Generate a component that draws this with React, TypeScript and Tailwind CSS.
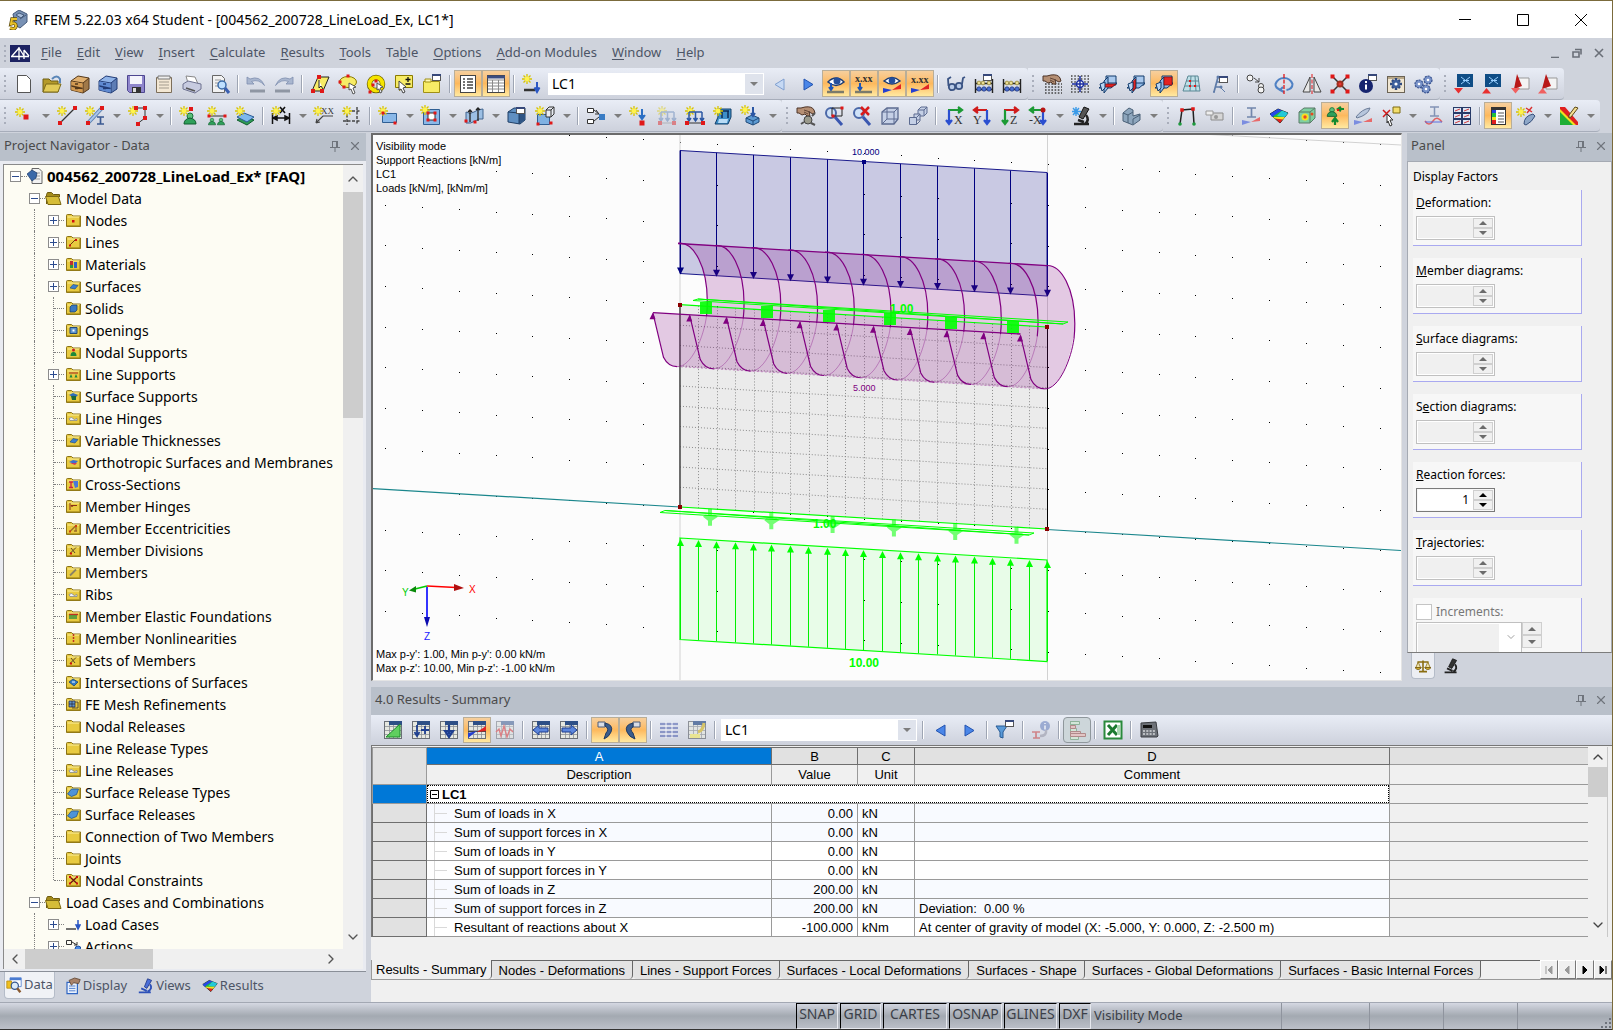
import React, { useState } from 'react';
import { ChevronDown, ChevronLeft, ChevronRight, ChevronUp, X } from 'lucide-react';
import clsx from 'clsx';

/* ---------- icon parts ---------- */

const Star = ({ x = 5, y = 5 }: { x?: number; y?: number }) => (
  <g stroke="#d8c400" strokeWidth="1.3">
    <path d={`M${x} ${y - 5}v10M${x - 5} ${y}h10M${x - 3.5} ${y - 3.5}l7 7M${x + 3.5} ${y - 3.5}l-7 7`} />
    <circle cx={x} cy={y} r="2.4" fill="#fff34d" stroke="none" />
  </g>
);

const Nd = ({ x, y, s = 4 }: { x: number; y: number; s?: number }) => (
  <rect x={x - s / 2} y={y - s / 2} width={s} height={s} fill="#e01818" />
);

const Sheet = ({ fill = '#fff' }: { fill?: string }) => (
  <path d="M3.5 1.5h9l4 4v13h-13z" fill={fill} stroke="#555" />
);

const Grid = () => (
  <>
    <rect x="1.5" y="1.5" width="17" height="17" fill="#e6e8e0" stroke="#6a6f76" />
    <path d="M2 6.500h16M2 10.500h16M2 14.500h16M6.500 2v16M10.500 2v16M14.500 2v16" stroke="#8b8f95" strokeWidth=".8" />
    <path d="M6 1h13v4H6z" fill="#2d4f86" />
  </>
);

const Abacus = () => (
  <>
    <path d="M1.500 5v14M18.500 5v14M1 9.500h18M1 15.500h18" stroke="#222" strokeWidth="1.400" />
    <g fill="#e9dc94" stroke="#8b7b28" strokeWidth=".7">
      <circle cx="5" cy="9" r="1.900" /><circle cx="9" cy="9" r="1.900" /><circle cx="15" cy="9" r="1.900" />
    </g>
    <g fill="#4a6fd0" stroke="#1b2f78" strokeWidth=".7">
      <circle cx="5" cy="15" r="2.200" /><circle cx="10" cy="15" r="2.200" /><circle cx="15" cy="15" r="2.200" />
    </g>
  </>
);

const Win = ({ x = 10, y = 1 }: { x?: number; y?: number }) => (
  <>
    <rect x={x + 0.5} y={y + 0.5} width="8" height="6" fill="#fff" stroke="#555" />
    <path d={`M${x} ${y + 1}h9`} stroke="#36487a" strokeWidth="2" />
  </>
);

const Planes = ({ hot }: { hot: string }) => (
  <>
    <path d="M8 2h10v9H8z" fill="#a9c9ee" stroke="#123a6b" />
    <path d="M1 14l6-5h12l-6 5z" fill="#8fb9e6" stroke="#123a6b" />
    <path d="M6 7l4-4v11l-4 5z" fill="#8fb9e6" stroke="#123a6b" />
    <path d={hot} fill="#e32222" stroke="#7a0d0d" strokeWidth=".7" />
    <path d="M2 10l5-2v6l-3 3z" fill="#b9d6f4" stroke="#123a6b" />
  </>
);

const Cabinet = ({ a, b, c }: { a: string; b: string; c: string }) => (
  <>
    <path d="M1 7l7-5 11 2v11l-6 4-12-3z" fill={a} stroke={c} />
    <path d="M13 9l6-5v11l-6 4z" fill={c} fillOpacity=".45" />
    <path d="M1 7l12 2 6-5M13 9v10M1 11.500l12 3" stroke={c} fill="none" />
    <path d="M1.500 7.500l11 2v9l-11-2.500z" fill={b} />
    <path d="M1.500 12l11 2.500M5 10h3M5 14.500h3" stroke={c} strokeWidth="1.300" />
  </>
);

const Cube = ({ fill = '#5f93c9', stroke = '#27496d' }: { fill?: string; stroke?: string }) => (
  <>
    <path d="M2 6l5-4h11v10l-5 5H2z" fill={fill} stroke={stroke} />
    <path d="M2 6h11v11M13 6l5-4" fill="none" stroke={stroke} />
  </>
);

const Support = ({ x, y, k = 1 }: { x: number; y: number; k?: number }) => (
  <g transform={`translate(${x} ${y}) scale(${k})`}>
    <circle r="3" fill="#5cc07a" stroke="#16713a" />
    <path d="M-6 8q0-5 6-6q6 1 6 6z" fill="#2fa05a" stroke="#0f5c2c" />
  </g>
);

const LoadArrows = ({ c }: { c: string }) => (
  <path d="M4 6h13M4 6v8M10.500 6v8M17 6v8M2 12l2 3 2-3M8.500 12l2 3 2-3M15 12l2 3 2-3" stroke={c} strokeWidth="1.500" fill="none" />
);

const Hand = () => (
  <>
    <path d="M1 2h4l4-1q7-1 9 3l1 3-2 1-4-2 1 4-3 0-2-2-3 1-3-2H1z" fill="#b58f74" stroke="#4d3428" />
    <path d="M8 4l6 2M8 6l4 2" stroke="#4d3428" strokeWidth=".8" />
  </>
);

const Axes = ({ h, v, flip, label }: { h: string; v: string; flip?: boolean; label: string }) => (
  <>
    <path d={flip ? 'M15 4H3M6 1L2 4l4 3' : 'M4 4h12M14 1l4 3-4 3'} stroke={h} strokeWidth="2.200" fill={h} />
    <path d={flip ? 'M15 4v12M12 14l3 4 3-4' : 'M5 4v12M2 14l3 4 3-4'} stroke={v} strokeWidth="2.200" fill={v} />
    <text x={flip ? 1 : 10} y="18" fontSize="12" fill="#333" fontFamily="Liberation Serif">{label}</text>
  </>
);

const gearPath = 'M10 4v12M4 10h12M6 6l8 8M14 6l-8 8';

const ICONS: Record<string, React.ReactNode> = {
  doc: <Sheet />,
  open: <><path d="M1 5h6l2 2h7v11H1z" fill="#b49a2a" stroke="#6f5e14" /><path d="M4 10h15l-3 8H1z" fill="#e2cb57" stroke="#7d6a18" /><path d="M10 5q5-5 8 0v4" stroke="#5a86b8" strokeWidth="2" fill="none" /></>,
  cabTan: <Cabinet a="#e0b070" b="#d39a52" c="#54381a" />,
  cabBlue: <Cabinet a="#8fb3e8" b="#5f8ad2" c="#223c77" />,
  save: <><path d="M1.500 1.500h17v17h-15l-2-2z" fill="#8f86cc" stroke="#4d4690" /><path d="M4 2h12v8H4z" fill="#f4f4fb" /><path d="M6 13h9v6H6z" fill="#333" /><path d="M7 14h3v4H7z" fill="#ddd" /></>,
  clip: <><path d="M2.500 3.500h15v15h-15z" fill="#f3e7d3" stroke="#7c6e5a" /><path d="M4 2h12v3H4z" fill="#efefef" stroke="#777" /><path d="M5 8h10M5 11h10M5 14h10" stroke="#a39b8d" /></>,
  print: <><path d="M4 2l9 1 3 7-10-1z" fill="#fff" stroke="#888" /><path d="M1 10l5-3 13 3v5l-6 4-12-4z" fill="#c7cbe0" stroke="#6e7290" /><path d="M4 14l9 3" stroke="#555" strokeWidth="1.500" /></>,
  preview: <><path d="M2.500 1.500h9l3 3v14h-12z" fill="#f2f2f2" stroke="#666" /><path d="M5 6h6M5 9h5M5 12h4" stroke="#999" /><circle cx="12" cy="11" r="4" fill="#bfe0ff" stroke="#3c6ca8" strokeWidth="1.500" /><path d="M15 14l4 5" stroke="#3a5fb0" strokeWidth="3" /></>,
  undo: <><path d="M1 3v7h7L5.500 7.500q7-3 13 4Q14 1 4 5z" fill="#a9b6cf" stroke="#7e8eae" strokeWidth=".8" /><path d="M4 17h15" stroke="#8f96a3" strokeWidth="3" /></>,
  redo: <><path d="M19 3v7h-7l2.500-2.500q-7-3-13 4Q6 1 16 5z" fill="#a9b6cf" stroke="#7e8eae" strokeWidth=".8" /><path d="M1 17h15" stroke="#8f96a3" strokeWidth="3" /></>,
  selPlane: <><path d="M8 3h11l-6 14H2z" fill="#f7ec66" stroke="#222" /><Nd x={9} y={3} /><Nd x={3} y={17} /><Nd x={12} y={17} /><path d="M9 6v8l2-2 2 3" fill="#fff" stroke="#222" /></>,
  selLasso: <><ellipse cx="10" cy="8" rx="8.500" ry="5.500" fill="#f7ec66" stroke="#8a7a00" /><Nd x={10} y={2} s={3} /><Nd x={2} y={8} s={3} /><Nd x={6} y={13} s={3} /><path d="M11 9l7 4-3 1 2 5-2 1-2-5-2 1z" fill="#fff" stroke="#555" /></>,
  selRing: <><circle cx="10" cy="10" r="6.500" fill="none" stroke="#6e6200" strokeWidth="5.500" /><circle cx="10" cy="10" r="6.500" fill="none" stroke="#f5e400" strokeWidth="4" /><Nd x={10} y={7} s={3} /><Nd x={7} y={11} s={3} /><Nd x={4} y={18} s={3} /><path d="M11 9l6 4-3 1 2 4-2 1-1-4-2 1z" fill="#fff" stroke="#555" /></>,
  selNote: <><path d="M1.500 1.500h17v12h-9l-4 3v-3h-4z" fill="#f7ec66" stroke="#8a7a00" /><path d="M14 3v5M11.500 5.500h5M11.500 10h5" stroke="#111" strokeWidth="1.300" /><path d="M5 7l7 6-3 1 2 4-2 1-2-4-2 1z" fill="#fff" stroke="#444" /></>,
  selWin: <><path d="M1.500 7.500h16v11h-16z" fill="#f7ec66" stroke="#a09016" /><path d="M3 5h6v3H3z" fill="#fff8b0" stroke="#a09016" /><Win x={10} y={0} /></>,
  list: <><rect x="2.500" y="1.500" width="15" height="17" fill="#fff" stroke="#444" /><path d="M5 5h2M5 8h2M5 11h2M5 14h2M9 5h6M9 8h6M9 11h6M9 14h6" stroke="#444" strokeWidth="1.300" /></>,
  tableI: <><rect x="1.500" y="1.500" width="17" height="17" fill="#fff" stroke="#444" /><path d="M1 3h18" stroke="#3b4d80" strokeWidth="3" /><path d="M2 6h16M2 9h16M2 12h16M2 15h16M6.500 6v12M12.500 6v12" stroke="#8a8a8a" /></>,
  loadStar: <><Star /><path d="M2 16h11" stroke="#333" strokeWidth="2.500" /><path d="M15 8v8M12.500 13.500L15 18l2.500-4.500" stroke="#2b57c4" strokeWidth="2" fill="#2b57c4" /></>,
  prev: <path d="M14 5v11l-9-5.500z" fill="#c6d9f4" stroke="#7f9fd0" />,
  prev2: <path d="M14 5v11l-9-5.500z" fill="#4a86e8" stroke="#2253b0" />,
  next: <path d="M6 5v11l9-5.500z" fill="#4a86e8" stroke="#2253b0" />,
  eyeLoad: <><path d="M2 8q8-8 16 0-8 7-16 0z" fill="#fff" stroke="#1d3c72" strokeWidth="1.500" /><circle cx="11" cy="7" r="3.500" fill="#244f9c" /><path d="M5 9v6M3 13l2 3 2-3" stroke="#1c56b8" strokeWidth="2" fill="#1c56b8" /><path d="M1 18h17" stroke="#7b7b6b" strokeWidth="2.500" /></>,
  xxLoad: <><text x="1" y="8" fontSize="10" fontWeight="bold" fill="#333" fontFamily="Liberation Serif">x.xx</text><path d="M6 9v6M4 13l2 3 2-3" stroke="#1c56b8" strokeWidth="2" fill="#1c56b8" /><path d="M1 18h17" stroke="#7b7b6b" strokeWidth="2.500" /></>,
  eyeRes: <><path d="M2 7q8-7 16 0-8 6-16 0z" fill="#fff" stroke="#1d3c72" strokeWidth="1.500" /><circle cx="10" cy="6.500" r="3.300" fill="#244f9c" /><path d="M1 14v5l9-3z" fill="#2440d0" /><path d="M19 10v5l-9 1z" fill="#e02525" /></>,
  xxRes: <><text x="1" y="9" fontSize="10" fontWeight="bold" fill="#333" fontFamily="Liberation Serif">x.xx</text><path d="M1 14v5l9-3z" fill="#2440d0" /><path d="M19 10v5l-9 1z" fill="#e02525" /></>,
  glasses: <g fill="#b7c9e6" stroke="#3b5484" strokeWidth="1.800"><circle cx="6" cy="13" r="3.200" /><circle cx="13" cy="12" r="3.200" /><path d="M2.500 12L2 5l3-2M16 10l1-6 2-1" fill="none" /></g>,
  abacusWin: <><Abacus /><Win x={9} y={0} /></>,
  abacus: <Abacus />,
  hand: <><path d="M3 10h17M3 13h17M3 16h17M3 19h17" stroke="#444" strokeWidth="1.600" strokeDasharray="1.600 1.600" /><Hand /></>,
  snapGrid: <><path d="M1 2h18M1 5h18M1 8h18M1 12h18M1 15h18M1 18h18" stroke="#444" strokeWidth="1.500" strokeDasharray="1.500 1.800" /><circle cx="10" cy="10" r="3.500" fill="#fff" stroke="#1c2fa0" strokeWidth="1.500" /><path d="M10 2v16M2 10h16" stroke="#1c2fa0" strokeWidth="1.500" /></>,
  plane1: <Planes hot="M3 13l4-3h11l-4 3z" />,
  plane2: <Planes hot="M7 7.500l2.500-2.500v9l-2.500 3z" />,
  plane3: <Planes hot="M10 3h8v8h-8z" />,
  mesh: <><path d="M6 2h10l2 15H1z" fill="#bfe0e8" stroke="#5b8794" /><path d="M4 7h13M3 12h15M9 2l-1 15M13 2l1 15" stroke="#5b8794" /><Nd x={8} y={7} s={2} /><Nd x={13} y={12} s={2} /><Nd x={8} y={12} s={2} /></>,
  tree: <><path d="M4 18L8 3M5 13h5M7 8h8M3 18h2" stroke="#5e7ba8" strokeWidth="1.700" fill="none" /><circle cx="8" cy="3" r="1.500" fill="#5e7ba8" /><circle cx="11" cy="13" r="1.500" fill="#5e7ba8" /><path d="M10 13l5 5" stroke="#5e7ba8" /><Win x={9} y={2} /></>,
  copyO: <g fill="#f4f4f4" stroke="#444"><circle cx="4" cy="4" r="3" /><circle cx="15" cy="12" r="2.500" /><circle cx="15" cy="16" r="3" /><path d="M8 4l5 4M13 4v4H9" fill="none" /></g>,
  rotate: <><path d="M7 16Q1 14 1.500 10 4 4 10 4t8.500 6q0 5-6 6M9 13l-3 3 4 2" fill="none" stroke="#4f81c4" strokeWidth="2" /><path d="M10 0v20" stroke="#e01818" strokeWidth="1.300" strokeDasharray="4 1.500" /></>,
  mirror: <><path d="M8 3v15H1zM12 3v15h7z" fill="#e8e8e8" stroke="#444" /><path d="M10 0v20" stroke="#e01818" strokeDasharray="4 1.500" /></>,
  explode: <><path d="M2 2l16 16M18 2L2 18" stroke="#333" strokeWidth="1.500" /><Nd x={2.500} y={2.500} /><Nd x={17.500} y={2.500} /><Nd x={2.500} y={17.500} /><Nd x={17.500} y={17.500} /><circle cx="10" cy="10" r="3.500" fill="#a03020" /><circle cx="10" cy="10" r="1.500" fill="#e33" /></>,
  info: <><Win x={10} y={0} /><circle cx="8" cy="12" r="7" fill="#16246e" /><path d="M8 7v2M8 10.500v5" stroke="#fff" strokeWidth="2" /></>,
  gearWin: <><rect x="1.500" y="2.500" width="17" height="16" fill="#f0e6d2" stroke="#6b6355" /><path d="M2 4h16" stroke="#b9a98a" strokeWidth="2" /><path d={gearPath} stroke="#2f4a80" strokeWidth="2.500" /><circle cx="10" cy="10" r="4" fill="#3e5f9c" /><circle cx="10" cy="10" r="1.600" fill="#fff" /></>,
  gears: <g fill="#7892c8" stroke="#354f8c" strokeWidth="1.200"><circle cx="5" cy="10" r="4" strokeDasharray="2 1" /><circle cx="14" cy="6" r="4" strokeDasharray="2 1" /><circle cx="12" cy="15" r="4" strokeDasharray="2 1" /><g fill="#fff" stroke="none"><circle cx="5" cy="10" r="1.300" /><circle cx="14" cy="6" r="1.300" /><circle cx="12" cy="15" r="1.300" /></g></g>,
  dxf1: <><path d="M3 0h16v13H3z" fill="#0f4d85" /><path d="M7 3l9 7M16 3L7 10M9 6.500h6" stroke="#9ad0ff" /><path d="M0 14h9l-4.500 5.500z" fill="#e83030" /></>,
  dxf2: <><path d="M3 0h16v13H3z" fill="#0f4d85" /><path d="M7 3l9 7M16 3L7 10M9 6.500h6" stroke="#9ad0ff" /><path d="M0 19.500h9L4.500 14z" fill="#e83030" /></>,
  pdf1: <><path d="M8 4h11v11H8z" fill="#f4f4f4" stroke="#999" /><path d="M7 0l5 12-8 3z" fill="#b81818" /><path d="M1 14h9l-4.500 5.500z" fill="#f06060" /></>,
  pdf2: <><path d="M8 4h11v11H8z" fill="#f4f4f4" stroke="#999" /><path d="M8 0l5 12-9 3z" fill="#b81818" /><path d="M0 19.500h9L4.500 14z" fill="#f06060" /></>,

  node: <><Star x={6} y={6} /><Nd x={12} y={11} s={5} /></>,
  line: <><path d="M3 17L18 2" stroke="#333" strokeWidth="1.300" /><Star /><Nd x={3} y={17} /><Nd x={18} y={2} /></>,
  member: <><path d="M3 17L17 2" stroke="#5b7fae" strokeWidth="4" /><path d="M3 17L17 2" stroke="#a9c5ea" strokeWidth="2" /><Star /><Nd x={17} y={2} /><Nd x={3} y={17} /><path d="M12 11h7M12 18h7M15.500 11v7" stroke="#3b5a92" strokeWidth="1.700" /></>,
  poly: <><path d="M8 2h9v10l-8 6" stroke="#333" fill="none" /><Star /><Nd x={8} y={2} /><Nd x={17} y={2} /><Nd x={17} y={12} /><Nd x={10} y={18} /></>,
  nsup: <><Support x={11} y={10} /><Star /><Nd x={12} y={3} /></>,
  lsup: <><path d="M2 10h16" stroke="#333" /><Support x={5} y={14} k={0.6} /><Support x={14} y={14} k={0.6} /><Star /><Nd x={2} y={10} s={3} /><Nd x={18} y={10} s={3} /></>,
  ssup: <><path d="M2 14l7-4 10 4-7 5z" fill="#2f9a55" stroke="#0f5c2c" /><path d="M2 11l7-4 10 4-7 5z" fill="#7db8ec" stroke="#2a5a96" /><Star /></>,
  dim: <><path d="M1.500 7v11M18.500 7v11M2 12h16M6 10l-4 2 4 2zM14 10l4 2-4 2z" stroke="#111" strokeWidth="1.500" fill="#111" /><path d="M9 1l5 6M14 1L9 7" stroke="#111" strokeWidth="1.600" /><Star /></>,
  xx: <><path d="M2 17l7-7h10M2 17l1-4M2 17l4-1" stroke="#444" strokeWidth="1.200" fill="none" /><text x="7" y="8" fontSize="9" fill="#333" fontFamily="Liberation Serif">XX</text><Star x={4} /></>,
  gridI: <><path d="M5 4v15M15 1v18M1 5h18M1 15h18" stroke="#444" strokeWidth="1.400" strokeDasharray="3 1.500" /><Star x={5} y={5} /></>,
  surf: <><path d="M4.500 7.500h14v9h-14z" fill="#8ab8e8" stroke="#2f5e93" /><Star /><Nd x={17} y={17} s={3} /><Nd x={5} y={7} s={3} /></>,
  opening: <><path d="M2.500 3.500h16v15h-16z" fill="#8ab8e8" stroke="#2f5e93" /><path d="M7 7h7v7H7z" fill="#fff" stroke="#333" /><Star x={4} y={4} /><Nd x={7} y={7} s={3} /><Nd x={14} y={7} s={3} /><Nd x={7} y={14} s={3} /><Nd x={14} y={14} s={3} /></>,
  warp: <><path d="M2 6q4 3 8 0t9-3v10q-4-1-8 2t-9 2z" fill="#9cbfe4" stroke="#41648f" /><path d="M6 4v12M14 2v13M4 6l2-2 2 2M12 4l2-2 2 2" stroke="#222" strokeWidth="1.300" /><Nd x={2} y={15} s={3} /><Nd x={11} y={16} s={3} /></>,
  solid: <><path d="M1 6l6-4h11v12l-5 4-12-2z" fill="#5f8fc2" stroke="#1f3f66" /><path d="M12 7l6-5v12l-6 4z" fill="#2f5585" /><path d="M1 6l11 1v11" fill="none" stroke="#1f3f66" /><Win x={9} y={1} /></>,
  solid2: <><path d="M2.500 8.500h12v10h-12z" fill="#7fb1e2" stroke="#2f5e93" /><path d="M11 4l3-3h5v7l-3 3h-5z" fill="#e8ecf2" stroke="#333" /><path d="M11 4h5v7M16 4l3-3" stroke="#333" /><Star /><Nd x={3} y={18} s={3} /><Nd x={16} y={17} s={3} /></>,
  sets: <><path d="M1.500 2.500h6v4h-6zM1.500 13.500h6v4h-6z" fill="#fff" stroke="#333" /><path d="M8 4l5 4M8 15l5-4M10 4l3 4-4 0" stroke="#333" fill="none" /><path d="M13 8h6v6h-6z" fill="#3a7cc4" /></>,
  nload: <><Star /><path d="M13 3v8M10 9l3 4 3-4" stroke="#2b6fc4" strokeWidth="2" fill="#2b6fc4" /><Nd x={13} y={17} s={5} /></>,
  llDim: <g opacity=".45"><Star /><LoadArrows c="#5a7fb5" /><path d="M3 17h15" stroke="#888" /><Nd x={3} y={17} /><Nd x={17} y={17} /></g>,
  lload: <><Star /><LoadArrows c="#2b57a4" /><path d="M3 17h15" stroke="#333" /><Nd x={2} y={17} /><Nd x={18} y={17} /></>,
  sload: <><path d="M4 3h14v8l-3 7H2l3-7z" fill="#3d8fc8" stroke="#14406b" /><path d="M9 5v7M15 5v7M7 5h9" stroke="#0c2c55" strokeWidth="1.500" /><path d="M6 13h9l-1 4H5z" fill="#b9dcf6" /><Star /></>,
  soload: <><path d="M5 12l6-3 7 3v4l-6 3-7-3z" fill="#5c9ad2" stroke="#1f4a7a" /><path d="M5 12l7 3 6-3M12 15v4" stroke="#1f4a7a" fill="none" /><path d="M12 1v8M10 7l2 3 2-3" stroke="#2b57a4" strokeWidth="2" fill="none" /><Star x={4} y={4} /></>,
  pan: <><Hand /><circle cx="12" cy="14" r="4" fill="#9a9a8c" stroke="#444" /><path d="M5 18l3-2M16 10l3-3M15 17l4 2" stroke="#555" strokeWidth="2" /></>,
  zoomRect: <><circle cx="7" cy="7" r="5" fill="#cfe2f8" stroke="#4b68a8" strokeWidth="2" /><path d="M11 11l7 8" stroke="#3a57b0" strokeWidth="3" /><path d="M8 2h10v8H8z" fill="none" stroke="#222" /><Nd x={9} y={10} s={3} /><Nd x={18} y={2} s={3} /></>,
  zoomX: <><circle cx="7" cy="7" r="5" fill="#cfe2f8" stroke="#4b68a8" strokeWidth="2" /><path d="M11 11l7 8" stroke="#3a57b0" strokeWidth="3" /><path d="M9 1l8 8M17 1L9 9" stroke="#d81b1b" strokeWidth="2.500" /></>,
  cubeW: <><path d="M2 6l5-4h11v11l-4 5H2z" fill="#c5d0e6" stroke="#5c6b90" strokeWidth="1.300" /><path d="M2 6h12v12M14 6l4-4M7 2v11h11M7 13l-5 5" fill="none" stroke="#5c6b90" /></>,
  cubesW: <g fill="#c5d0e6" stroke="#5c6b90"><path d="M10 4l3-3h6v6l-3 3h-6z" /><path d="M10 4h6v6M16 4l3-3" /><path d="M6 8h6v6H6z" /><path d="M1.500 11.500h7v7h-7z" /><path d="M8.500 18.500l4-4M8.500 11.500L12 8" /></g>,
  axX: <Axes h="#1c9a35" v="#2b4fd0" label="X" />,
  axY: <Axes h="#d01c1c" v="#2b4fd0" flip label="Y" />,
  axZ: <Axes h="#d01c1c" v="#1c9a35" label="Z" />,
  axMX: <><Axes h="#1c9a35" v="#2b4fd0" flip label="-X" /><circle cx="15" cy="4" r="2.500" fill="#b81414" /></>,
  scope: <><path d="M13 1l5 2-6 10-4-2z" fill="#555" stroke="#111" /><path d="M3 18h15M15 9q4 5-1 9M7 14l6 2" stroke="#222" strokeWidth="2.500" fill="none" /><path d="M5 1v9M1 5.500h9M2 2l6 7M8 2L2 9" stroke="#3a9ae8" strokeWidth="1.400" /></>,
  iso: <><path d="M1 7l6-5 4 2v6l7-2v6l-7 5-10-4z" fill="#8ea6bd" stroke="#4a6077" /><path d="M1 7l5 2v8M6 9l5-3M11 13l7-4M11 13v5" fill="none" stroke="#4a6077" /></>,
  frame: <><path d="M3 18L5 4l11-1 1 15" fill="none" stroke="#222" strokeWidth="1.500" /><Nd x={5} y={4} s={3.500} /><Nd x={16} y={3} s={3.500} /><circle cx="3" cy="18" r="1.800" fill="#1d9a3d" /><circle cx="17" cy="18" r="1.800" fill="#1d9a3d" /></>,
  camera: <><path d="M6 7h12v7H6z" fill="#d6d6d6" stroke="#8c8c8c" /><path d="M1 5h7v4H1z" fill="#eee" stroke="#999" /><circle cx="11" cy="11" r="2" fill="#999" /></>,
  iDiag: <><path d="M6 2h9M6 11h9M10.500 2v9" stroke="#7286ac" strokeWidth="1.700" /><path d="M1 14v5l9-3z" fill="#7b8de0" /><path d="M19 11v4l-9 1z" fill="#e86a6a" /></>,
  rainbow: <><path d="M1 8l8-5 10 4-8 10z" fill="#1fbf3a" stroke="#222" /><path d="M1 8l8-5 4 1.500L3 11z" fill="#2548e8" /><path d="M13 4.500L19 7l-3 4-8-1z" fill="#24c8d8" /><path d="M6 12l8 1-3 4z" fill="#e82020" /><path d="M4 11l12 0-2 2.500-8-1z" fill="#f5e020" /></>,
  stress: <><Cube fill="#7fd0a0" stroke="#5b7a68" /><circle cx="8" cy="11" r="3.500" fill="#f5e020" /><circle cx="8" cy="11" r="1.700" fill="#e84a20" /><circle cx="15" cy="8" r="1.500" fill="#e84a20" /></>,
  reac: <><Support x={7} y={4} k={0.8} /><path d="M19 3h-5M16 1l-3 2 3 2M10 19v-6M7 16l3-4 3 4" stroke="#138a2e" strokeWidth="2.200" fill="none" /><Nd x={13} y={4} s={2} /></>,
  section: <><path d="M3 11q6-8 14-9-2 7-13 10z" fill="#b7c6dc" stroke="#6b7c98" /><path d="M1 14v5l9-3z" fill="#7b8de0" /><path d="M19 12v4l-9 0z" fill="#e86a6a" /></>,
  note: <><path d="M12 1h7v6h-7z" fill="#f2dd6b" stroke="#7d6b12" /><path d="M2 4l7 7M9 4L2 11" stroke="#d01818" strokeWidth="1.500" /><path d="M6 8l6 6-3 0 2 5-2 1-2-5-1 2z" fill="#fff" stroke="#333" /></>,
  iWave: <><path d="M6 1h9M6 10h9M10.500 1v9" stroke="#8293b5" strokeWidth="1.500" /><path d="M1 15q4 6 8 0t9 1" stroke="#e06060" strokeWidth="1.500" fill="none" /><path d="M1 16h17" stroke="#5b6fe0" /></>,
  multi: <><path d="M1 1h18v18H1z" fill="#273a68" /><g fill="#dfe6f4"><path d="M2 2h7v4H2zM11 2h7v4h-7zM2 8h7v4H2zM11 8h7v4h-7zM2 14h7v4H2zM11 14h7v4h-7z" /></g><path d="M3 5l5-2M12 5l5-2M3 11l5-2M12 11l5-2M3 17l5-2M12 17l5-2" stroke="#d03a3a" /></>,
  panelI: <><rect x="3.500" y="1.500" width="14" height="17" fill="#fff" stroke="#333" /><path d="M3 2.500h15" stroke="#333" strokeWidth="3" /><path d="M4 4h4v3H4z" fill="#2040e0" /><path d="M4 7h4v4H4z" fill="#20c040" /><path d="M4 11h4v3H4z" fill="#f0e020" /><path d="M4 14h4v4H4z" fill="#e02020" /><path d="M10 7h6M10 10h6M10 13h6M10 16h6" stroke="#555" /></>,
  wand: <><Star x={5} y={6} /><path d="M8 18q0-8 9-10l2 2q-3 6-9 9z" fill="#8ea7c8" stroke="#37507c" /><path d="M10 2l6 4M16 1l-5 6" stroke="#d83030" strokeWidth="1.400" /></>,
  pencil: <><path d="M1 2v17h17z" fill="#1fae35" /><path d="M1 6l13 13h4L1 2z" fill="#f0e020" /><path d="M1 1h5l13 15v3h-2L1 3z" fill="#e02020" /><path d="M19 2l-7 9-2 1 0-3 6-8z" fill="#f5dd90" stroke="#5c4a16" /></>,

  gTri: <><Grid /><path d="M3 17L17 4v13z" fill="#5fcf5f" stroke="#1d8a2d" /></>,
  gPlus: <><Grid /><path d="M6 5v10M3.500 12L6 16l2.500-4M14 6v8M10 10h8" stroke="#1f3f8f" strokeWidth="1.800" fill="none" /></>,
  gDown: <><Grid /><path d="M10 5v9M6 11l4 6 4-6z" stroke="#1f3f8f" strokeWidth="2.200" fill="#4a72c8" /></>,
  gDiag: <><Grid /><path d="M1 11.500l18 0" stroke="#444" /><path d="M1 18v-5l9-2z" fill="#2440d0" /><path d="M19 6v5l-9 1z" fill="#e02525" /></>,
  gPulse: <g opacity=".5"><Grid /><path d="M1 12l3-3 2 7 3-10 3 11 3-8 3 3" stroke="#e02525" fill="none" strokeWidth="1.400" /></g>,
  gLeft: <><Grid /><path d="M2 10l6-5v3h9v4H8v3z" fill="#5b86dc" stroke="#1f3f8f" /></>,
  gRight: <><Grid /><path d="M18 10l-6-5v3H3v4h9v3z" fill="#5b86dc" stroke="#1f3f8f" /></>,
  cv1: <><path d="M3 2h7v5H3z" fill="#d8dde6" stroke="#4c5d78" /><path d="M10 3q9 2 6 9-2 5-7 7l2-6q4-4-1-7z" fill="#3a5c8c" stroke="#213a60" /></>,
  cv2: <><path d="M10 2h7v5h-7z" fill="#d8dde6" stroke="#4c5d78" /><path d="M10 3Q1 5 4 12q2 5 8 7l-2-6Q6 9 10 7z" fill="#3a5c8c" stroke="#213a60" /></>,
  gBlue: <g opacity=".7"><path d="M1 2h18v16H1z" fill="#d5d9ea" /><path d="M1 4h18M1 8h18M1 12h18M1 16h18" stroke="#6a78b8" strokeWidth="2" /><path d="M7 2v16M13 2v16" stroke="#fff" /></g>,
  gNote: <g opacity=".7"><Grid /><path d="M3 14h10v4H3z" fill="#f2ea70" /><path d="M17 3q-1 8-6 9" stroke="#d4b830" strokeWidth="3" fill="none" /></g>,
  filter: <><path d="M1 6h11l-4 6v6l-3-1v-5z" fill="#5a9ad8" stroke="#275a94" /><Win x={10} y={0} /></>,
  pinInfo: <g opacity=".5"><circle cx="14" cy="6" r="5" fill="#5a74b8" /><path d="M14 3v1M14 5.500v4" stroke="#fff" strokeWidth="1.500" /><path d="M1 12h8M2 18h7M5 12v6" stroke="#c83030" strokeWidth="1.700" /><path d="M9 16q7 0 6-6" stroke="#8f8f9f" strokeWidth="2.500" fill="none" /></g>,
  bars: <><path d="M3.500 1v18" stroke="#8a9a90" /><path d="M3.500 1.500h9v3h-9zM3.500 8.500h6v3h-6zM3.500 16.500h8v3h-8z" fill="#d3e6d8" stroke="#8fb39a" /><path d="M3.500 5.500h5v3h-5zM3.500 11.500h10v2h-10zM3.500 13.500h15v3h-15z" fill="#e2c4c4" stroke="#b08a8a" /></>,
  excel: <><path d="M1.500 1.500h17v17h-17z" fill="#fff" stroke="#2a8a3c" strokeWidth="2" /><path d="M5 5l9 10M14 5L5 15" stroke="#1c7a30" strokeWidth="3" /><path d="M14 5h3v10h-3" fill="#a8d8b0" /></>,
  calc: <><path d="M2 3l15-1 2 14-1 1H2z" fill="#6d7178" stroke="#3a3d42" /><path d="M4 5h9v3H4z" fill="#111" /><path d="M4 11h12M4 14h12" stroke="#d5d7da" strokeWidth="1.500" strokeDasharray="2 1.300" /></>,
  scales: <><path d="M10 3v13M3 5h14M5 17h10" stroke="#8a6d10" strokeWidth="2" /><path d="M4 5l-3 7h6zM16 5l-3 7h6z" fill="#efe3b0" stroke="#8a6d10" /><path d="M0 12q4 5 8 0zM12 12q4 5 8 0z" fill="#d8b430" stroke="#6b5208" /></>,
  scopeB: <><path d="M12 1l5 2-6 10-4-2z" fill="#333" stroke="#111" /><path d="M2 18h15M15 8q4 5-2 9M5 13l7 3" stroke="#222" strokeWidth="2.400" fill="none" /></>,
  tabData: <><path d="M5 1h14v11H5z" fill="#fff" stroke="#4a7bd0" /><path d="M5 2.500h14" stroke="#4a7bd0" strokeWidth="3" /><path d="M1 5h6v9H1z" fill="#f0c020" stroke="#b88a10" /><circle cx="11" cy="11" r="4.500" fill="#dcebfa" stroke="#35568f" strokeWidth="1.500" /><path d="M14 14l4 5" stroke="#8a5a30" strokeWidth="3" /></>,
  tabDisplay: <><path d="M2.500 5.500h13v14h-13z" fill="#eaf1fc" stroke="#2f66c4" strokeWidth="1.500" /><path d="M5 10h8M5 13h8M5 16h8" stroke="#2f66c4" /><path d="M5 3l7-3 7 2-2 5-6-1-3 3z" fill="#a8826a" stroke="#5c4230" /></>,
  tabViews: <><path d="M12 1l5 2-6 10-3-2z" fill="#4a6ed8" stroke="#1c3484" /><path d="M1 18h15M15 8q4 5-3 9M4 13l7 3" stroke="#2c50b8" strokeWidth="2.400" fill="none" /></>,
};

const Icon = ({ name, className = 'h-5 w-5' }: { name: string; className?: string }) => (
  <svg viewBox="0 0 20 20" fill="none" className={clsx('block shrink-0 overflow-visible', className)} aria-hidden="true">
    {ICONS[name]}
  </svg>
);

/* ---------- toolbars ---------- */

const Caret = () => (
  <svg viewBox="0 0 8 4" className="h-1 w-2" aria-hidden="true">
    <path d="M0 0h8L4 4z" fill="#7d7d7d" />
  </svg>
);

const Grip = () => (
  <span className="flex w-[10px] shrink-0 flex-col items-center justify-center gap-[3px]">
    {[0, 1, 2, 3].map((i) => (
      <span key={i} className="h-[2px] w-[2px] bg-[#a9aebb]" />
    ))}
  </span>
);

// '|' separator, 'v' drop-down arrow, '*name' pressed, '~name' pressed and greyed
const Tools = ({ items }: { items: string[] }) => (
  <>
    {items.map((it, i) => {
      if (it === '|') {
        return (
          <span key={i} className="flex w-2 shrink-0 items-center justify-center">
            <span className="h-[18px] w-px bg-[#9ea5b3]" />
            <span className="h-[18px] w-px bg-white" />
          </span>
        );
      }
      if (it === 'v') {
        return (
          <button key={i} type="button" aria-label="More" className="flex w-[15px] shrink-0 items-center justify-center">
            <Caret />
          </button>
        );
      }
      const hot = it[0] === '*';
      const grey = it[0] === '~';
      const name = hot || grey ? it.slice(1) : it;
      return (
        <button
          key={i}
          type="button"
          aria-label={name}
          className={clsx(
            'my-[2px] flex w-7 shrink-0 items-center justify-center',
            hot && 'border border-[#b9ae98] bg-linear-to-b from-[#f6cf9d] via-[#fdb95d] to-[#ffe9a0]',
            grey && 'rounded-sm border border-[#8f979c] bg-[#cdd6da]',
          )}
        >
          <Icon name={name} />
        </button>
      );
    })}
  </>
);

const Bar = ({ children }: { children: React.ReactNode }) => (
  <div className="flex h-8 shrink-0 items-stretch rounded-r-sm border-b border-[#a7adba] bg-linear-to-b from-[#e9edf6] to-[#cdd1dc] pr-[2px]">
    {children}
  </div>
);

const Combo = ({ label, width }: { label: string; width: string }) => (
  <div className={clsx('relative flex h-[22px] shrink-0 self-center bg-white', width)}>
    <select aria-label={label} className="h-[22px] w-full appearance-none bg-transparent px-1 text-[14px] leading-[22px] text-black outline-none">
      <option>LC1</option>
    </select>
    <span className="pointer-events-none absolute inset-y-px right-px flex w-[18px] items-center justify-center bg-[#dfe3ec]">
      <Caret />
    </span>
  </div>
);

const MENU = [
  ['', 'F', 'ile'], ['', 'E', 'dit'], ['', 'V', 'iew'], ['', 'I', 'nsert'], ['', 'C', 'alculate'], ['', 'R', 'esults'],
  ['', 'T', 'ools'], ['Ta', 'b', 'le'], ['', 'O', 'ptions'], ['', 'A', 'dd-on Modules'], ['', 'W', 'indow'], ['', 'H', 'elp'],
];

const PaneHeader = ({ title }: { title: string }) => (
  <div className="flex h-7 shrink-0 items-center bg-[#b9c0ca] pb-[2px] pl-1 text-[13px] text-[#4a4a4a]">
    <h2>{title}</h2>
    <span className="ml-auto flex items-center gap-2 pr-1 text-[#6f747c]">
      <button type="button" aria-label="Pin">
        <svg viewBox="0 0 10 12" className="h-3 w-[10px]" fill="none" stroke="currentColor"><path d="M2.500 1v6M6.500 1v6M7.500 1v6M2 1.500h6M0 7.500h10M5 8v4" /></svg>
      </button>
      <button type="button" aria-label="Close"><X className="h-[14px] w-[14px]" /></button>
    </span>
  </div>
);

/* ---------- navigator ---------- */

const FOLDER_MARKS: Record<string, React.ReactNode> = {
  none: null,
  dot: <rect x="6" y="6" width="2.500" height="2.500" fill="#d01010" />,
  line: <><path d="M3.500 9.500l6-6" stroke="#6b3a10" /><path d="M9 3h2v2H9zM3 8.500h2v2H3z" fill="#d01010" /></>,
  mat: <><path d="M4 3h3v4H4z" fill="#c03030" /><path d="M8 4h3v6H8z" fill="#2f60c8" /><path d="M4 7h3v3H4z" fill="#2a9a40" /></>,
  flat: <path d="M4 8l3-3.500 5 1-3 3.500z" fill="#3b7fd0" stroke="#1d4580" strokeWidth=".6" />,
  solid: <path d="M4 5l2-2h5v5l-2 2H4z" fill="#3a78c0" stroke="#173a66" strokeWidth=".7" />,
  open: <><path d="M4 3.500h7v6H4z" fill="#5f94cc" stroke="#224a7a" /><path d="M6.500 5.500h2v2h-2z" fill="#fff" /></>,
  nsup: <><circle cx="7.500" cy="4" r="1.500" fill="#c82020" /><path d="M4.500 10q0-4 3-4t3 4z" fill="#1d8a3a" /></>,
  lsup: <><path d="M3 5h9" stroke="#a02020" /><path d="M3.500 9.500l1.500-3.500 1.500 3.500zM8.500 9.500L10 6l1.500 3.500z" fill="#1d8a3a" /></>,
  ssup: <><path d="M3 5l4-2 5 2-3 3z" fill="#2f6db8" /><path d="M5 6h5v4H6z" fill="#1c6a3a" /></>,
  hinge: <path d="M3 6.500q3-2 4 0t4 0l0 2H4z" fill="#eef2fa" stroke="#7a7f88" strokeWidth=".7" />,
  ortho: <><path d="M3 6l4-2 5 1-3 3z" fill="#3b6fd0" /><path d="M4 7l5 2 2-2z" fill="#d03a5a" /></>,
  cross: <><path d="M3 4h4M3 9.500h4M5 4v5.500" stroke="#d02040" strokeWidth="1.300" /><path d="M7 3h5v6l-3 1z" fill="#4a78d8" /></>,
  mhinge: <path d="M4 3v7M5 5.500h6M5 5.500a1 1 0 102 0" stroke="#8a3018" fill="none" />,
  mem: <path d="M4 9.500l6-6" stroke="#8a8264" strokeWidth="1.800" />,
  ecc: <><path d="M4 9.500l6-6M10 5v4M8 9h3" stroke="#9a6a28" strokeWidth="1.300" /><path d="M9 3h2v2H9zM3 8.500h2v2H3z" fill="#d04010" /></>,
  div: <><path d="M4 9.500l6-6M5 4l4 5" stroke="#5a4a2a" /><path d="M4 8.500h2v2H4z" fill="#d01010" /></>,
  elastic: <><path d="M3 4.500h9" stroke="#c03020" strokeWidth="1.500" /><path d="M4 5v4M6 5v4M8 5v4M10 5v4" stroke="#1d8a3a" strokeWidth="1.300" /></>,
  nonlin: <path d="M7.500 2v9" stroke="#c03020" strokeWidth="1.500" strokeDasharray="2 1" />,
  inter: <><path d="M3 6l4-3 5 3-4 4z" fill="#2f7cc8" stroke="#133a66" strokeWidth=".7" /><path d="M6 6h3" stroke="#fff" /></>,
  fe: <><path d="M3 3h6v6H3z" fill="#5f94cc" stroke="#224" strokeWidth=".7" /><path d="M6 3v6M3 6h6M9 4h3v6H6" stroke="#223" strokeWidth=".7" fill="none" /></>,
  big: <path d="M1.500 8l4-5h7l-2 5.500-5 2z" fill="#4d93d8" stroke="#1f5590" strokeWidth=".8" />,
  con: <><path d="M4 3l7 6.500M11 3L4 9.500" stroke="#6a1010" strokeWidth="1.200" /><path d="M3 2h2v2H3zM10 2h2v2h-2zM3 8.500h2v2H3zM10 8.500h2v2h-2z" fill="#d01010" /></>,
};

const Folder = ({ mark }: { mark: string }) => (
  <svg viewBox="0 0 15 13" className="h-[13px] w-[15px] shrink-0" fill="none" aria-hidden="true">
    <path d="M.5 1.500q0-1 1-1h4l1.500 1.500h7.500v10.500H.5z" fill="#e8ca40" stroke="#8b7316" />
    <path d="M1.500 3h12" stroke="#fbef9c" />
    <path d="M1 11.800h13M13.800 3v9" stroke="#a88c1c" />
    {FOLDER_MARKS[mark]}
  </svg>
);

const OpenFolder = () => (
  <svg viewBox="0 0 17 13" className="h-[13px] w-[17px] shrink-0" fill="none" aria-hidden="true">
    <path d="M1.500 12V2.500l1-2h4l2 2h6V5" fill="#a48b1a" stroke="#6f5c10" />
    <path d="M.5 4.500h13l2.500 8H3z" fill="#d6bd38" stroke="#7d6912" />
  </svg>
);

const MODEL_ITEMS: [string, string, boolean?][] = [
  ['Nodes', 'dot', true], ['Lines', 'line', true], ['Materials', 'mat', true], ['Surfaces', 'flat', true],
  ['Solids', 'solid'], ['Openings', 'open'], ['Nodal Supports', 'nsup'], ['Line Supports', 'lsup', true],
  ['Surface Supports', 'ssup'], ['Line Hinges', 'hinge'], ['Variable Thicknesses', 'flat'],
  ['Orthotropic Surfaces and Membranes', 'ortho'], ['Cross-Sections', 'cross'], ['Member Hinges', 'mhinge'],
  ['Member Eccentricities', 'ecc'], ['Member Divisions', 'div'], ['Members', 'mem'], ['Ribs', 'hinge'],
  ['Member Elastic Foundations', 'elastic'], ['Member Nonlinearities', 'nonlin'], ['Sets of Members', 'div'],
  ['Intersections of Surfaces', 'inter'], ['FE Mesh Refinements', 'fe'], ['Nodal Releases', 'none'],
  ['Line Release Types', 'none'], ['Line Releases', 'hinge'], ['Surface Release Types', 'big'],
  ['Surface Releases', 'big'], ['Connection of Two Members', 'none'], ['Joints', 'none'], ['Nodal Constraints', 'con'],
];

const Expander = ({ open }: { open: boolean }) => (
  <button
    type="button"
    aria-label={open ? 'Collapse' : 'Expand'}
    className="flex h-[11px] w-[11px] shrink-0 items-center justify-center border border-[#8c8c8c] bg-white"
  >
    <svg viewBox="0 0 7 7" className="h-[7px] w-[7px]" stroke="#2b4b8f"><path d={open ? 'M0 3.500h7' : 'M0 3.500h7M3.500 0v7'} /></svg>
  </button>
);

const Dots = ({ w }: { w: string }) => <span className={clsx('shrink-0 border-t border-dotted border-[#808080]', w)} />;

// vertical guide line through the middle of an 11px expander column
const Guide = ({ half = false }: { half?: boolean }) => (
  <span className={clsx('ml-[5px] w-px shrink-0 self-start border-l border-dotted border-[#808080]', half ? 'h-[11px]' : 'h-[22px]')} />
);

const Leaf = ({ text, icon, plus, last }: { text: string; icon: React.ReactNode; plus?: boolean; last?: boolean }) => (
  <li className="flex h-[22px] items-center">
    <span className="w-6 shrink-0" />
    <Guide />
    <span className="w-[13px] shrink-0" />
    {plus ? <><Expander open={false} /><Dots w="w-[5px]" /></> : <><Guide half={last} /><Dots w="w-[10px]" /></>}
    <span className="flex w-[19px] shrink-0 justify-center">{icon}</span>
    <span className="ml-[2px] whitespace-nowrap">{text}</span>
  </li>
);

const Branch = ({ text }: { text: string }) => (
  <li className="flex h-[22px] items-center">
    <span className="w-6 shrink-0" />
    <Expander open />
    <Dots w="w-[5px]" />
    <OpenFolder />
    <span className="ml-1">{text}</span>
  </li>
);

const Navigator = () => (
  <aside className="flex w-[366px] shrink-0 flex-col">
    <PaneHeader title="Project Navigator - Data" />
    <div className="flex min-h-0 flex-1 flex-col border-b border-[#8a8f98] bg-[#e9ebf1] p-[3px] pb-[2px]">
      <div className="grid min-h-0 flex-1 grid-cols-[1fr_20px] grid-rows-[minmax(0,1fr)_20px] border-l border-t border-[#8a8a8a] bg-[#f0f0f0]">
        <ul className="min-h-0 overflow-hidden bg-[#fdfcf3] pl-px text-[14px] text-black">
          <li className="flex h-[22px] items-center font-bold">
            <span className="w-[5px] shrink-0" />
            <Expander open />
            <Dots w="w-[6px]" />
            <svg viewBox="0 0 16 16" className="h-4 w-4 shrink-0" fill="none" aria-hidden="true">
              <path d="M5 .5h7l3 3v12H5z" fill="#f2f2f2" stroke="#666" />
              <path d="M8 5h5M8 8h5M8 11h5" stroke="#999" />
              <path d="M0 6l5-4 5 3-1 5-4 3z" fill="#3a68a8" stroke="#1c3a68" strokeWidth=".7" />
            </svg>
            <span className="ml-1 text-[15px]">004562_200728_LineLoad_Ex* [FAQ]</span>
          </li>
          <Branch text="Model Data" />
          {MODEL_ITEMS.map(([text, mark, plus], i) => (
            <Leaf key={text} text={text} plus={plus} last={i === MODEL_ITEMS.length - 1} icon={<Folder mark={mark} />} />
          ))}
          <Branch text="Load Cases and Combinations" />
          <Leaf text="Load Cases" plus icon={
            <svg viewBox="0 0 15 13" className="h-[13px] w-[15px]" fill="none"><path d="M0 11h10" stroke="#444" strokeWidth="1.500" /><path d="M12 2v7M10 7l2 4 2-4z" stroke="#2b57c4" strokeWidth="1.500" fill="#2b57c4" /></svg>
          } />
          <Leaf text="Actions" plus icon={
            <svg viewBox="0 0 15 13" className="h-[13px] w-[15px]" fill="none"><path d="M.5.5h5v4h-5zM6 2l5 3M11 2v3H8" stroke="#333" /><circle cx="12" cy="9" r="3" fill="#4a8ae8" stroke="#1c4fa0" /></svg>
          } />
        </ul>
        <div className="flex min-h-0 flex-col items-center text-[#555]">
          <button type="button" aria-label="Scroll up" className="flex h-[27px] shrink-0 items-center"><ChevronUp className="h-4 w-4" /></button>
          <div className="h-[226px] w-full shrink-0 bg-[#cdcdcd]" />
          <button type="button" aria-label="Scroll down" className="mt-auto flex h-6 items-center"><ChevronDown className="h-4 w-4" /></button>
        </div>
        <div className="flex items-center text-[#555]">
          <button type="button" aria-label="Scroll left" className="flex w-[21px] justify-center"><ChevronLeft className="h-4 w-4" /></button>
          <div className="h-full w-32 bg-[#cdcdcd]" />
          <button type="button" aria-label="Scroll right" className="ml-auto flex w-6 justify-center"><ChevronRight className="h-4 w-4" /></button>
        </div>
        <div />
      </div>
    </div>
    <div className="flex h-[30px] shrink-0 items-start gap-[9px] pl-1 text-[13px] text-[#4d5566]">
      {[['Data', 'tabData'], ['Display', 'tabDisplay'], ['Views', 'tabViews'], ['Results', 'rainbow']].map(([t, ic], i) => (
        <button
          key={t}
          type="button"
          className={clsx('flex h-[27px] items-center gap-[2px] px-px', i === 0 && 'rounded-b-sm border border-t-0 border-[#b5bcc8] bg-[#f0f2f6]')}
        >
          <Icon name={ic} className="h-4 w-4" />
          {t}
        </button>
      ))}
    </div>
  </aside>
);

/* ---------- model view ---------- */

const L = 680;
const R = 1047;
const DX = 36.75;
const DY = 2.23;
const range = (n: number) => Array.from({ length: n }, (_, i) => i);

const ModelView = () => (
  <svg viewBox="373 135 1028 545" preserveAspectRatio="xMinYMin slice" className="block h-full w-full" fontFamily="Liberation Sans" fontSize="11">
    <g fill="#000">
      {range(14).map((r) =>
        range(28).map((c) => (
          <rect key={`${r}-${c}`} x={Math.round(385 + c * 36.84)} y={Math.round(83 + r * 40.6 + c * 2.27)} width="1" height="1" />
        )),
      )}
    </g>
    <path d="M680 135v546M1047.500 135v546M1200 134l201 11" stroke="#d2d2d2" />
    <path d="M372 488.500L680 507M1047 529.500l354 21" stroke="#1a868c" strokeWidth="1.200" />

    {/* plate with FE mesh */}
    <path d={`M${L} 305L${R} 327V529L${L} 507z`} fill="#ebebeb" />
    <g stroke="#8b8b8b" strokeDasharray="1 2">
      {range(19).map((i) => {
        const x = Math.round(L + (i + 1) * 18.38) + 0.5;
        const y = 305 + (i + 1) * 1.115;
        return <path key={i} d={`M${x} ${y}V${y + 202}`} />;
      })}
      {range(9).map((i) => {
        const y = 305 + (i + 1) * 20.25;
        return <path key={i} d={`M${L} ${y}L${R} ${y + 22}`} />;
      })}
    </g>
    <path d="M680 305V507" stroke="#444" strokeWidth="1.500" />
    <path d="M1047.500 327V529" stroke="#000" />

    {/* line load p-z */}
    <path d="M680 150.500L1047 172.500V296L680 273.500z" fill="#000080" fillOpacity=".2" stroke="#1a1a8c" />
    {range(11).map((i) => {
      const x = Math.round(L - 0.4 + i * DX) + 0.5;
      const y = 150.5 + i * DY;
      return (
        <g key={i}>
          <path d={`M${x} ${y}V${y + 122}`} stroke="#000080" />
          <path d={`M${x - 3.5} ${y + 117}h7l-3.500 7z`} fill="#000080" />
        </g>
      );
    })}
    <rect x="862" y="160" width="4" height="4" fill="#000080" />
    <text x="852" y="155" fontSize="9" fill="#000080">10.000</text>

    {/* line moment */}
    <path
      d="M680 243.300C694 241.300 707.300 267.300 707.300 301.300Q707.300 309 706.500 316L653 312.600 663.500 357.500C666 362.500 671 366.600 677 366.600L1044.500 389C1062.500 389.300 1074.500 345.600 1074.500 323.600 1074.500 289.600 1061.500 263.600 1047.500 265.600z"
      fill="#800080"
      fillOpacity=".2"
    />
    <path d="M678 243.500L1047 265.600M653 312.600L1020.500 334" stroke="#800080" strokeWidth="1.300" />
    <path d="M677 366.600L1044 389" stroke="#800080" strokeOpacity=".35" strokeDasharray="2 2" />
    {range(11).map((i) => (
      <g key={i} transform={`translate(${L + i * DX} ${243.3 + i * DY})`} fill="none" stroke="#800080">
        <path d="M-2 0C14-2 27.300 24 27.300 58Q27.300 66 26.500 73" strokeWidth="1.200" />
        <path d="M26.500 73C24 92 12 124-3 123.300" strokeOpacity={i === 10 ? 1 : 0.35} />
        <path d="M-3 123.300C-9 123.300-14 119-16.500 114L-27 70" strokeWidth="1.200" />
        <path d="M-27 69l-3.500 7h6z" fill="#800080" stroke="none" />
      </g>
    ))}
    <text x="853" y="391" fontSize="9" fill="#800080">5.000</text>

    {/* upper line support */}
    <g stroke="#00ff00" fill="none">
      <path d="M680 304.700L1047 327" strokeWidth="1.200" />
      <path d="M693 300.500l5-1.500 370 23-5 2zM698 299l365 25" />
    </g>
    {range(6).map((i) => (
      <rect key={i} x={700 + Math.round(i * 61.3)} y={302 + Math.round(i * 3.8)} width="12" height="12" fill="#00ff00" fillOpacity=".9" />
    ))}
    <text x="890" y="313" fontSize="12" fontWeight="bold" fill="#00ff00">1.00</text>

    {/* lower line support */}
    <g stroke="#00ff00" fill="none">
      <path d="M680 507L1047 529" strokeWidth="1.200" />
      <path d="M660 512.500l5-2 369 22.500-5 2zM665 510.500l364 24.500" />
    </g>
    {range(6).map((i) => (
      <path
        key={i}
        transform={`translate(${710 + i * 61.3} ${516.7 + i * 3.6})`}
        d="M-2-8h4v6h3l3 2-6 4v5h-4v-5l-5-4 2-2h3z"
        fill="#00ff00"
        fillOpacity=".55"
      />
    ))}
    <text x="813" y="528" fontSize="12" fontWeight="bold" fill="#00ff00">1.00</text>

    {/* support reaction p-z' */}
    <path d="M680 538L1047 560V661.500L680 639.500z" fill="#00ff00" fillOpacity=".08" stroke="#00ff00" strokeWidth="1.200" />
    {range(21).map((i) => {
      const x = Math.round(L - 0.4 + i * 18.375) + 0.5;
      const y = 539 + i * 1.1;
      return (
        <g key={i}>
          <path d={`M${x} ${y + 6}V${y + 100}`} stroke="#00f000" />
          <path d={`M${x - 3.5} ${y + 7}h7l-3.500-7z`} fill="#00ff00" />
        </g>
      );
    })}
    <text x="849" y="667" fontSize="12" fontWeight="bold" fill="#00ff00">10.00</text>

    <g fill="#8b0000">
      <rect x="678" y="303" width="4" height="4" /><rect x="1045" y="325" width="4" height="4" />
      <rect x="678" y="505" width="4" height="4" /><rect x="1045" y="527" width="4" height="4" />
    </g>

    {/* global axes */}
    <g strokeWidth="1.600">
      <path d="M427 586l29 1.500" stroke="#f00" /><path d="M454 584l10 4-10 3z" fill="#b01010" />
      <path d="M427 586l-12 3" stroke="#0c0" /><path d="M416 586l-7 4.500 7 2z" fill="#0a8a0a" />
      <path d="M427 587v32" stroke="#00f" /><path d="M424 617h6l-3 10z" fill="#0b0bb0" />
    </g>
    <text x="402" y="596" fontSize="10" fill="#0c0">Y</text>
    <text x="469" y="593" fontSize="10" fill="#f00">X</text>
    <text x="424" y="640" fontSize="10" fill="#22f">Z</text>

    <g fill="#000">
      <text x="376" y="150">Visibility mode</text>
      <text x="376" y="164">Support Reactions [kN/m]</text>
      <text x="376" y="178">LC1</text>
      <text x="376" y="192">Loads [kN/m], [kNm/m]</text>
      <text x="376" y="658">Max p-y': 1.00, Min p-y': 0.00 kN/m</text>
      <text x="376" y="672">Max p-z': 10.00, Min p-z': -1.00 kN/m</text>
    </g>
  </svg>
);

/* ---------- factor panel ---------- */

const Spin = ({ dim }: { dim: boolean }) => (
  <span className="flex w-5 flex-col">
    {['M4 0l4 4H0z', 'M0 0h8L4 4z'].map((d) => (
      <button key={d} type="button" aria-label="Step" disabled={dim} className="flex flex-1 items-center justify-center border border-[#cfcfcf] bg-[#f0f0f0]">
        <svg viewBox="0 0 8 4" className="h-1 w-2" fill={dim ? '#6b6b6b' : '#000'}><path d={d} /></svg>
      </button>
    ))}
  </span>
);

const FACTORS = [
  ['', 'D', 'eformation:'], ['', 'M', 'ember diagrams:'], ['', 'S', 'urface diagrams:'],
  ['S', 'e', 'ction diagrams:'], ['', 'R', 'eaction forces:'], ['', 'T', 'rajectories:'],
];

const FactorPanel = () => (
  <aside className="flex w-[205px] shrink-0 flex-col">
    <PaneHeader title="Panel" />
    <div className="min-h-0 flex-1 overflow-hidden border border-[#a5aab3] border-b-[#7c7c7c] bg-[#f0f0f0] px-[5px] pt-[6px] text-[12px] text-black">
      <h3 className="h-[22px] leading-[18px]">Display Factors</h3>
      <div className="flex flex-col gap-3">
        {FACTORS.map(([a, u, b]) => {
          const dim = u !== 'R';
          return (
            <div key={u} className="h-14 w-[169px] border-b border-r border-[#a9a9f0] bg-[#f7f7f7] pl-[3px] pt-1">
              <label htmlFor={`f-${u}`} className="block h-[22px] leading-[18px]">{a}<u>{u}</u>{b}</label>
              <div className={clsx('flex h-6 w-[79px] border p-px', dim ? 'border-[#c0c0c0] bg-white' : 'border-[#7a7a7a]')}>
                <input
                  id={`f-${u}`}
                  disabled={dim}
                  defaultValue={dim ? '' : '1'}
                  className={clsx('w-0 min-w-0 flex-1 px-1 text-right outline-none', dim ? 'bg-[#f0f0f0]' : 'bg-white')}
                />
                <Spin dim={dim} />
              </div>
            </div>
          );
        })}
        <div className="h-[80px] w-[169px] shrink-0 border-r border-[#a9a9f0] bg-[#f7f7f7] pl-[3px] pt-1">
          <label className="flex h-5 items-center gap-1 text-[#777]">
            <input type="checkbox" disabled className="h-4 w-4 appearance-none border border-[#c4c4c4] bg-white" />
            Increments:
          </label>
          <div className="flex">
            <div className="relative h-[34px] w-[106px] border border-[#c0c0c0] bg-white">
              <select aria-label="Increments" disabled className="h-full w-[83px] appearance-none border border-white bg-[#f0f0f0]" />
              <ChevronDown className="pointer-events-none absolute right-1 top-2 h-3 w-3 text-[#a0a0a0]" />
            </div>
            <div className="flex h-[26px]"><Spin dim /></div>
          </div>
        </div>
      </div>
    </div>
    <div className="flex h-7 shrink-0 items-start gap-2 pl-1">
      <button type="button" aria-label="Factors" className="flex h-[26px] w-6 items-center justify-center rounded-b-sm border border-t-0 border-[#b5bcc8] bg-[#eceef3]">
        <Icon name="scales" className="h-4 w-4" />
      </button>
      <button type="button" aria-label="Filter" className="flex h-[26px] w-4 items-center justify-center">
        <Icon name="scopeB" className="h-4 w-4" />
      </button>
    </div>
  </aside>
);

/* ---------- results ---------- */

const ROWS = [
  { d: 'Sum of loads in X', v: '0.00', u: 'kN', c: '', tint: true },
  { d: 'Sum of support forces in X', v: '0.00', u: 'kN', c: '', tint: true },
  { d: 'Sum of loads in Y', v: '0.00', u: 'kN', c: '', tint: false },
  { d: 'Sum of support forces in Y', v: '0.00', u: 'kN', c: '', tint: false },
  { d: 'Sum of loads in Z', v: '200.00', u: 'kN', c: '', tint: true },
  { d: 'Sum of support forces in Z', v: '200.00', u: 'kN', c: 'Deviation:  0.00 %', tint: true },
  { d: 'Resultant of reactions about X', v: '-100.000', u: 'kNm', c: 'At center of gravity of model (X: -5.000, Y: 0.000, Z: -2.500 m)', tint: false },
];

const TABS = [
  'Results - Summary', 'Nodes - Deformations', 'Lines - Support Forces', 'Surfaces - Local Deformations',
  'Surfaces - Shape', 'Surfaces - Global Deformations', 'Surfaces - Basic Internal Forces',
];

const cell = 'h-[19px] border border-[#9a9a9a] p-0';

const Results = () => {
  const [tab, setTab] = useState(0);
  return (
    <section className="flex shrink-0 flex-col bg-[#f0f0f0]">
      <PaneHeader title="4.0 Results - Summary" />
      <div className="flex h-[30px] items-stretch bg-linear-to-b from-[#e9edf6] to-[#cdd1dc] pl-2">
        <Tools items={['gTri', 'gPlus', 'gDown', '*gDiag', 'gPulse', '|', 'gLeft', 'gRight', '|', '*cv1', '*cv2', '|', 'gBlue', 'gNote', '|']} />
        <Combo label="Load case" width="mx-[2px] w-[196px]" />
        <Tools items={['|', 'prev2', 'next', '|', 'filter', '|', 'pinInfo', '|', '~bars', '|', 'excel', '|', 'calc']} />
      </div>
      <div className="flex border-l border-t border-[#777] pt-px font-['Liberation_Sans',sans-serif] text-[13px] leading-none text-black">
        <table className="flex-1 table-fixed border-collapse">
          <colgroup>
            <col className="w-[54px]" /><col className="w-[345px]" /><col className="w-[86px]" />
            <col className="w-[57px]" /><col className="w-[475px]" /><col />
          </colgroup>
          <thead>
            <tr className="bg-[#e1e1e1]">
              <th rowSpan={2} className="border border-[#9a9a9a]" />
              <th className="h-[17px] border border-[#6e6e6e] bg-[#0078d7] p-0 font-normal text-white">A</th>
              <th className="h-[17px] border border-[#6e6e6e] p-0 font-normal">B</th>
              <th className="h-[17px] border border-[#6e6e6e] p-0 font-normal">C</th>
              <th className="h-[17px] border border-[#6e6e6e] p-0 font-normal">D</th>
              <th className="h-[17px] border border-r-0 border-[#9a9a9a] p-0" />
            </tr>
            <tr>
              {['Description', 'Value', 'Unit', 'Comment'].map((h) => (
                <th key={h} className="h-5 border border-[#9a9a9a] p-0 font-normal">{h}</th>
              ))}
              <th className="h-5 border border-r-0 border-[#9a9a9a] p-0" />
            </tr>
          </thead>
          <tbody>
            <tr>
              <th className={clsx(cell, 'bg-[#0078d7]')} />
              <td colSpan={4} className={clsx(cell, 'bg-white font-bold')}>
                <span className="flex h-[18px] items-center gap-[3px] border border-dotted border-black pl-[2px]">
                  <svg viewBox="0 0 9 9" className="h-[9px] w-[9px]" fill="#fff" stroke="#000"><path d="M.5.5h8v8h-8zM2 4.500h5" /></svg>
                  LC1
                </span>
              </td>
              <td className="border-y border-[#9a9a9a] bg-[#f0f0f0]" />
            </tr>
            {ROWS.map((r) => (
              <tr key={r.d} className={r.tint ? 'bg-[#f8faff]' : 'bg-white'}>
                <th className="h-[19px] border border-[#6e6e6e] bg-[#e1e1e1] p-0" />
                <td className={cell}>
                  <span className="flex items-center">
                    <span className="ml-[7px] h-[18px] w-px bg-[#d9d9d9]" />
                    <span className="mr-[7px] h-px w-3 bg-[#d9d9d9]" />
                    {r.d}
                  </span>
                </td>
                <td className={clsx(cell, 'pr-1 text-right')}>{r.v}</td>
                <td className={clsx(cell, 'pl-1')}>{r.u}</td>
                <td className={clsx(cell, 'whitespace-pre pl-1')}>{r.c}</td>
                <td className="border-y border-[#9a9a9a] bg-[#f0f0f0]" />
              </tr>
            ))}
          </tbody>
        </table>
        <div className="mr-1 flex w-5 flex-col items-center border-r border-[#c8c8c8] text-[#444]">
          <button type="button" aria-label="Scroll up" className="flex h-5 items-center"><ChevronUp className="h-4 w-4" /></button>
          <div className="h-[30px] w-[19px] bg-[#cdcdcd]" />
          <button type="button" aria-label="Scroll down" className="mt-auto flex h-6 items-center"><ChevronDown className="h-4 w-4" /></button>
        </div>
      </div>
      <div className="mt-[23px] flex h-5 border-b border-l border-[#9a9a9a] font-['Liberation_Sans',sans-serif] text-[13px] leading-none text-black">
        {TABS.map((t, i) => (
          <button
            key={t}
            type="button"
            onClick={() => setTab(i)}
            className={clsx(
              'shrink-0 rounded-b-sm border-r border-[#666] whitespace-nowrap',
              tab === i ? 'bg-[#f0f0f0] px-1' : 'border-t bg-[#e3e3e3] px-[7px]',
            )}
          >
            {t}
          </button>
        ))}
        <span className="flex-1 border-t border-[#666]" />
        {['M2 1v8M8 1L4 5l4 4z', 'M7 1L3 5l4 4z', 'M3 1l4 4-4 4z', 'M2 1l4 4-4 4zM8 1v8'].map((d, i) => (
          <button key={d} type="button" aria-label="Scroll tabs" className="flex w-[18px] items-center justify-center border border-l-white border-t-white border-r-[#777] border-b-[#777]">
            <svg viewBox="0 0 10 10" className="h-[10px] w-[10px]" fill={i < 2 ? '#999' : '#000'} stroke={i < 2 ? '#999' : '#000'}><path d={d} /></svg>
          </button>
        ))}
      </div>
      <div className="h-[22px]" />
    </section>
  );
};

const FLAGS: [string, string][] = [
  ['SNAP', 'w-[42px]'], ['GRID', 'w-[41px]'], ['CARTES', 'w-[64px]'], ['OSNAP', 'w-[53px]'], ['GLINES', 'w-[53px]'], ['DXF', 'w-[32px]'],
];

export default function App() {
  return (
    <div className="flex h-screen flex-col overflow-hidden border-t border-r border-[#7b6b3c] bg-[#cfd3dc] font-['Noto_Sans','Open_Sans',sans-serif]">
      <header className="flex h-[37px] shrink-0 items-center bg-white pl-2 text-[14px] text-black">
        <svg viewBox="0 0 20 20" className="mr-[6px] h-5 w-5" fill="none" aria-hidden="true">
          <path d="M5 4l6-4 8 4v8l-7 6-5-3z" fill="#7891b4" stroke="#44597a" />
          <path d="M8 5l3-2 5 2-3 3zM12 9l6-4" fill="#a8bcd8" stroke="#44597a" />
          <path d="M9 9H4l-1 5q5-2 5 2t-6 2" stroke="#5f4c0c" strokeWidth="3.500" />
          <path d="M9 9H4l-1 5q5-2 5 2t-6 2" stroke="#e8c22a" strokeWidth="2" />
        </svg>
        <h1>RFEM 5.22.03 x64 Student - [004562_200728_LineLoad_Ex, LC1*]</h1>
        <div className="ml-auto flex pr-[2px]">
          {['M0 5.500h12', 'M.5.500h11v11H.5z', 'M0 0l12 12M12 0L0 12'].map((d) => (
            <button key={d} type="button" aria-label="Window control" className="flex w-[58px] justify-center">
              <svg viewBox="0 0 12 12" className="h-3 w-3" fill="none" stroke="#000"><path d={d} /></svg>
            </button>
          ))}
        </div>
      </header>

      <nav className="flex h-[30px] shrink-0 items-center text-[13px] text-[#4d5566]">
        <Grip />
        <svg viewBox="0 0 20 17" className="mr-[11px] h-[17px] w-5" aria-hidden="true">
          <path d="M0 0h20v17H0z" fill="#1c2262" />
          <path d="M1 11.500h18M9 2v13M9 3l-7 8M9 3l5 8M14 5l5 6M14 5v9" fill="none" stroke="#fff" strokeWidth="1.300" />
        </svg>
        <div className="flex gap-[15px]">
          {MENU.map(([a, u, b]) => (
            <button key={b} type="button">{a}<u className="underline-offset-2">{u}</u>{b}</button>
          ))}
        </div>
        <div className="ml-auto flex items-end gap-3 pr-2 text-[#6a6f78]">
          {['M1 9.500h8', 'M3 1.500h6v5M1 4h6v5H1z', 'M1 1l8 8M9 1L1 9'].map((d) => (
            <button key={d} type="button" aria-label="Document control">
              <svg viewBox="0 0 10 10" className="h-[10px] w-[10px]" fill="none" stroke="currentColor" strokeWidth="1.600"><path d={d} /></svg>
            </button>
          ))}
        </div>
      </nav>

      <div className="flex shrink-0">
        <Bar>
          <Grip />
          <Tools items={['doc', 'open', 'cabTan', 'cabBlue', 'save', 'clip', 'print', 'preview', '|', 'undo', 'redo', '|', 'selPlane', 'selLasso', 'selRing', 'selNote', 'selWin', '|', '*list', '*tableI', '|', 'loadStar']} />
          <Combo label="Load case" width="mx-[2px] w-[216px]" />
          <Tools items={['prev', 'next', '*eyeLoad', '*xxLoad', '*eyeRes', '*xxRes', '|', 'glasses', 'abacusWin', 'abacus']} />
        </Bar>
        <Bar>
          <Grip />
          <Tools items={['hand', 'snapGrid', 'plane1', 'plane2', '*plane3', 'mesh', 'tree', '|', 'copyO', 'rotate', 'mirror', 'explode', 'info', 'gearWin', 'gears']} />
        </Bar>
        <Bar>
          <Grip />
          <Tools items={['dxf1', 'dxf2', 'pdf1', 'pdf2']} />
        </Bar>
      </div>
      <div className="flex shrink-0">
        <Bar>
          <Grip />
          <Tools items={['node', 'v', 'line', 'member', 'v', 'poly', 'v', '|', 'nsup', 'lsup', 'ssup', '|', 'dim', 'v', 'xx', 'gridI', '|', 'surf', 'v', 'opening', 'v', 'warp', 'v', 'solid', 'solid2', 'v', '|', 'sets', 'v', 'nload', 'llDim', 'lload', 'sload', 'soload', 'v']} />
        </Bar>
        <Bar>
          <Grip />
          <Tools items={['pan', 'zoomRect', 'zoomX', 'cubeW', 'cubesW', '|', 'axX', 'axY', 'axZ', 'axMX', 'v', 'scope', 'v', '|', 'iso', 'v']} />
        </Bar>
        <Bar>
          <Grip />
          <Tools items={['frame', 'camera', '|', 'iDiag', 'rainbow', 'stress', '*reac', 'section', 'note', 'v', 'iWave', 'multi', '|', '*panelI', 'wand', 'v', 'pencil', 'v']} />
        </Bar>
      </div>

      <main className="mt-px flex min-h-0 flex-1 gap-[5px]">
        <Navigator />
        <div className="flex min-w-0 flex-1 flex-col gap-[6px]">
          <div className="flex min-h-0 flex-1 gap-[5px]">
            <div className="min-w-0 flex-1 border border-t-2 border-l-2 border-[#e4e4e4] border-t-[#6b6b6b] border-l-[#6b6b6b] bg-[#fcfcfc]">
              <ModelView />
            </div>
            <FactorPanel />
          </div>
          <Results />
        </div>
      </main>

      <footer className="flex h-7 shrink-0 items-stretch border-t border-b border-t-[#a3a8b3] border-b-[#333] bg-linear-to-b from-[#d5d8e2] via-[#a3a9b1] to-[#bcc0c9] text-[14px] text-[#3b3f48]">
        <div className="ml-[796px] flex gap-[2px]">
          {FLAGS.map(([f, w]) => (
            <button key={f} type="button" className={clsx('flex items-center justify-center border border-t-black border-l-black border-r-[#e6e8ee] border-b-[#e6e8ee] pb-1 leading-none', w)}>
              {f}
            </button>
          ))}
        </div>
        <span className="ml-[3px] flex w-[188px] items-center border-r border-[#8f949e] text-[13px]">Visibility Mode</span>
        <span className="w-[88px] border-r border-[#8f949e]" />
        <span className="w-[74px] border-r border-[#8f949e]" />
        <span className="w-[74px] border-r border-[#8f949e]" />
        <svg viewBox="0 0 12 12" className="ml-auto h-3 w-3 self-end" fill="#6e737c" aria-hidden="true">
          <path d="M9 1h2v2H9zM9 5h2v2H9zM9 9h2v2H9zM5 5h2v2H5zM5 9h2v2H5zM1 9h2v2H1z" />
        </svg>
      </footer>
    </div>
  );
}
